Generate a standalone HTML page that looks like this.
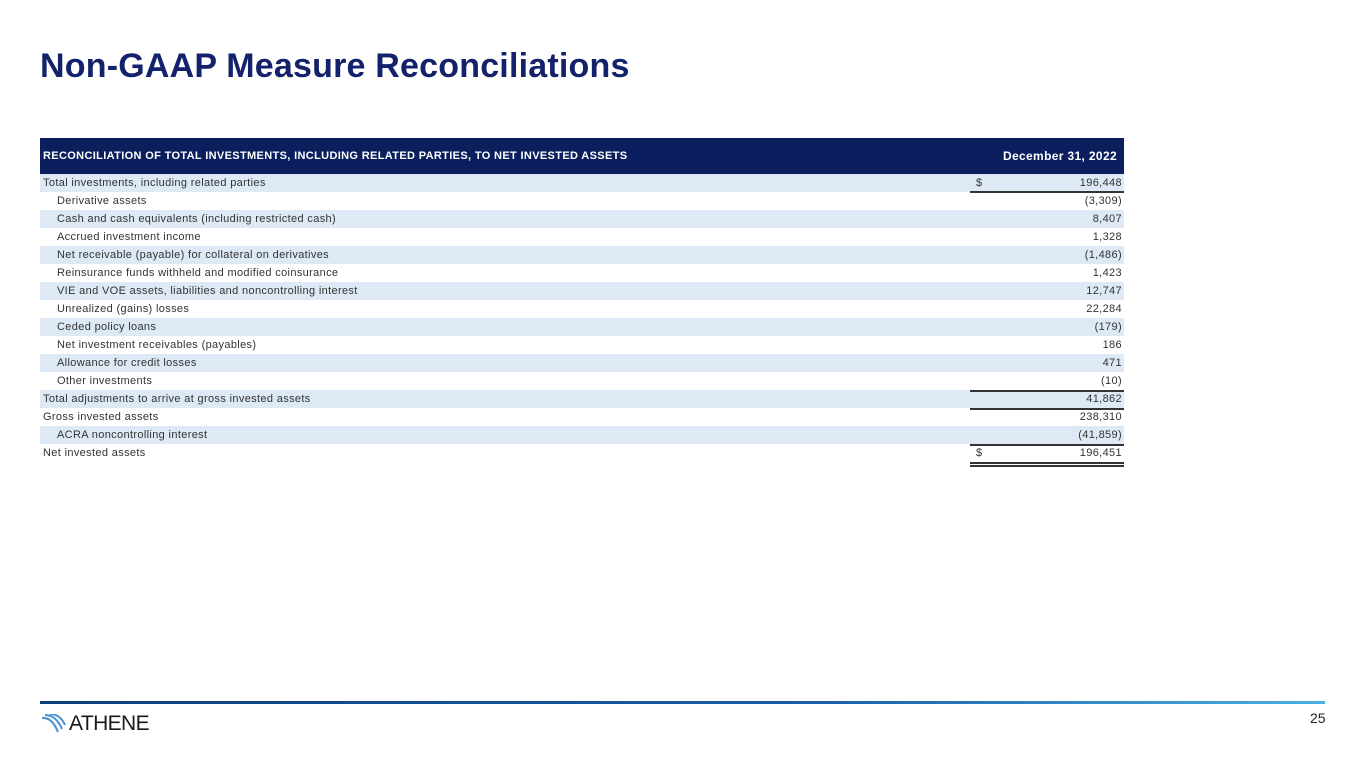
<!DOCTYPE html>
<html><head><meta charset="utf-8"><style>
*{margin:0;padding:0;box-sizing:border-box}
body{width:1365px;height:768px;background:#fff;position:relative;overflow:hidden;font-family:"Liberation Sans",sans-serif}
h1{position:absolute;left:40px;top:47px;font-size:34px;font-weight:bold;color:#14226b;letter-spacing:0.2px;white-space:nowrap}
.hdr{position:absolute;left:40px;top:138px;width:1084px;height:36px;background:#0b1f5e;color:#fff;font-size:11px;font-weight:bold;letter-spacing:0.35px}
.hdr span{position:absolute;top:11px}
.row{position:absolute;left:40px;width:1084px;height:18px;font-size:11px;color:#333;letter-spacing:0.35px}
.row.s{background:#dde9f5}
.row .l{position:absolute;top:3px;left:3px;white-space:nowrap}
.row .l.i{left:17px}
.row .v{position:absolute;top:3px;right:2px}
.row .d{position:absolute;top:3px;left:936px}
.ln{position:absolute;left:970px;width:154px;height:1.5px;background:#333}
</style></head><body>
<h1>Non-GAAP Measure Reconciliations</h1>
<div class="hdr"><span style="left:3px;top:12px">RECONCILIATION OF TOTAL INVESTMENTS, INCLUDING RELATED PARTIES, TO NET INVESTED ASSETS</span><span style="right:7px;font-size:12px">December 31, 2022</span></div>
<div class="row s" style="top:174px"><span class="l">Total investments, including related parties</span><span class="d">$</span><span class="v">196,448</span></div>
<div class="row" style="top:192px"><span class="l i">Derivative assets</span><span class="v">(3,309)</span></div>
<div class="row s" style="top:210px"><span class="l i">Cash and cash equivalents (including restricted cash)</span><span class="v">8,407</span></div>
<div class="row" style="top:228px"><span class="l i">Accrued investment income</span><span class="v">1,328</span></div>
<div class="row s" style="top:246px"><span class="l i">Net receivable (payable) for collateral on derivatives</span><span class="v">(1,486)</span></div>
<div class="row" style="top:264px"><span class="l i">Reinsurance funds withheld and modified coinsurance</span><span class="v">1,423</span></div>
<div class="row s" style="top:282px"><span class="l i">VIE and VOE assets, liabilities and noncontrolling interest</span><span class="v">12,747</span></div>
<div class="row" style="top:300px"><span class="l i">Unrealized (gains) losses</span><span class="v">22,284</span></div>
<div class="row s" style="top:318px"><span class="l i">Ceded policy loans</span><span class="v">(179)</span></div>
<div class="row" style="top:336px"><span class="l i">Net investment receivables (payables)</span><span class="v">186</span></div>
<div class="row s" style="top:354px"><span class="l i">Allowance for credit losses</span><span class="v">471</span></div>
<div class="row" style="top:372px"><span class="l i">Other investments</span><span class="v">(10)</span></div>
<div class="row s" style="top:390px"><span class="l">Total adjustments to arrive at gross invested assets</span><span class="v">41,862</span></div>
<div class="row" style="top:408px"><span class="l">Gross invested assets</span><span class="v">238,310</span></div>
<div class="row s" style="top:426px"><span class="l i">ACRA noncontrolling interest</span><span class="v">(41,859)</span></div>
<div class="row" style="top:444px"><span class="l">Net invested assets</span><span class="d">$</span><span class="v">196,451</span></div>
<div class="ln" style="top:191px"></div>
<div class="ln" style="top:390px"></div>
<div class="ln" style="top:408px"></div>
<div class="ln" style="top:444px"></div>
<div class="ln" style="top:462px"></div>
<div class="ln" style="top:465px"></div>
<div style="position:absolute;left:40px;top:701px;width:1285px;height:3px;background:linear-gradient(90deg,#0d3f7a,#1a5ea8 60%,#4ab0e0)"></div>
<svg style="position:absolute;left:42px;top:714px" width="30" height="20" viewBox="0 0 30 20">
<g fill="none" stroke="#4a8fd0" stroke-width="2">
<path d="M0 4 Q10 3 16 18"/><path d="M3 1 Q14 1 20 15"/><path d="M8 0 Q18 0 23 11"/>
</g></svg>
<div style="position:absolute;left:69px;top:712px;font-family:'Liberation Sans',sans-serif;font-size:21px;color:#1a1a1a;letter-spacing:-0.6px">ATHENE</div>
<div style="position:absolute;left:1310px;top:710px;font-size:14px;color:#222">25</div>
</body></html>
